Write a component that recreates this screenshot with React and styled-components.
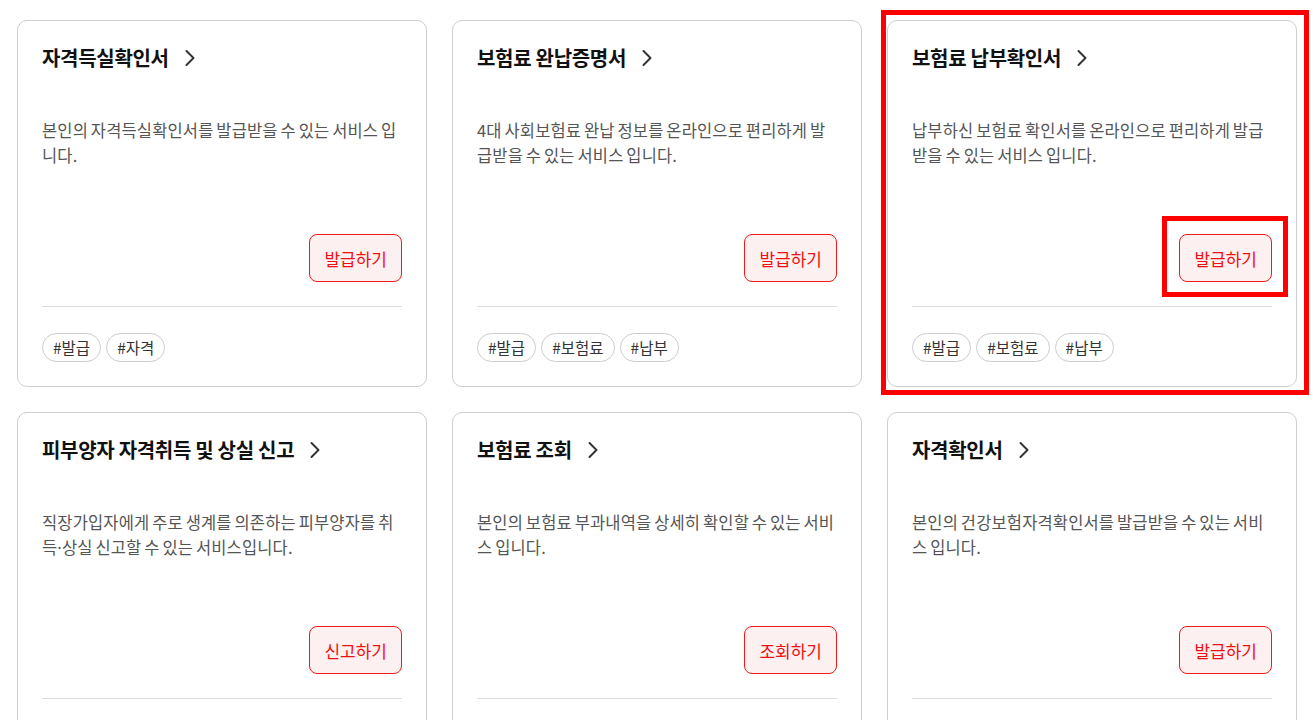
import React from "react"
import styled, { createGlobalStyle } from "styled-components"

const GlobalStyle = createGlobalStyle`
  html, body {
    margin: 0;
    padding: 0;
    background: #fff;
  }
  body {
    font-family: "Noto Sans CJK KR", "Noto Sans", sans-serif;
    color: #111;
  }
`

const services = [
  {
    title: "자격득실확인서",
    desc: "본인의 자격득실확인서를 발급받을 수 있는 서비스 입니다.",
    action: "발급하기",
    tags: ["발급", "자격"],
  },
  {
    title: "보험료 완납증명서",
    desc: "4대 사회보험료 완납 정보를 온라인으로 편리하게 발급받을 수 있는 서비스 입니다.",
    action: "발급하기",
    tags: ["발급", "보험료", "납부"],
  },
  {
    title: "보험료 납부확인서",
    desc: "납부하신 보험료 확인서를 온라인으로 편리하게 발급받을 수 있는 서비스 입니다.",
    action: "발급하기",
    tags: ["발급", "보험료", "납부"],
    highlighted: true,
  },
  {
    title: "피부양자 자격취득 및 상실 신고",
    desc: "직장가입자에게 주로 생계를 의존하는 피부양자를 취득·상실 신고할 수 있는 서비스입니다.",
    action: "신고하기",
    tags: ["신고", "피부양자"],
  },
  {
    title: "보험료 조회",
    desc: "본인의 보험료 부과내역을 상세히 확인할 수 있는 서비스 입니다.",
    action: "조회하기",
    tags: ["조회", "보험료"],
  },
  {
    title: "자격확인서",
    desc: "본인의 건강보험자격확인서를 발급받을 수 있는 서비스 입니다.",
    action: "발급하기",
    tags: ["발급", "자격"],
  },
]

const Grid = styled.div`
  display: grid;
  grid-template-columns: repeat(3, 410px);
  column-gap: 25px;
  row-gap: 25px;
  padding: 20px 0 40px 17px;
`

const Card = styled.article`
  position: relative;
  box-sizing: border-box;
  width: 410px;
  border: 1px solid #cfcfcf;
  border-radius: 10px;
  padding: 24px 24px 24px;
  background: #fff;
`

const Mark = styled.div`
  position: absolute;
  border: 5px solid #ff0000;
  pointer-events: none;
`

const CardMark = styled(Mark)`
  left: -7px;
  top: -11px;
  right: -13px;
  bottom: -9px;
`

const ButtonMark = styled(Mark)`
  left: -17px;
  top: -18px;
  right: -16px;
  bottom: -15px;
`

const TitleLink = styled.a`
  display: inline-flex;
  align-items: center;
  gap: 15px;
  height: 26px;
  font-size: 20px;
  font-weight: 700;
  line-height: 26px;
  color: #111;
  text-decoration: none;
  letter-spacing: -0.3px;
`

const Desc = styled.p`
  margin: 47px 0 0;
  height: 50px;
  font-size: 16.5px;
  line-height: 25px;
  letter-spacing: 0.15px;
  word-spacing: -1px;
  color: #555;
  word-break: break-all;
`

const Dot = styled.span`
  font-family: "Noto Sans", sans-serif;
`

const ActionRow = styled.div`
  display: flex;
  justify-content: flex-end;
  margin-top: 66px;
`

const ButtonWrap = styled.div`
  position: relative;
`

const ActionButton = styled.button`
  box-sizing: border-box;
  height: 48px;
  padding: 0 14px;
  border: 1px solid #f01a1a;
  border-radius: 8px;
  background: #fdf0f0;
  color: #ee1111;
  font-family: inherit;
  font-size: 17px;
  cursor: pointer;
`

const Divider = styled.hr`
  margin: 24px 0 0;
  border: 0;
  border-top: 1px solid #dcdcdc;
`

const Tags = styled.ul`
  display: flex;
  gap: 5px;
  margin: 26px 0 0;
  padding: 0;
  list-style: none;
`

const Tag = styled.li`
  box-sizing: border-box;
  height: 29px;
  padding: 0 10px;
  border: 1px solid #cccccc;
  border-radius: 15px;
  font-size: 15.5px;
  line-height: 27px;
  color: #333;
`

const Chevron = () => (
  <svg width="12" height="18" viewBox="0 0 12 18" fill="none">
    <path d="M2.5 2 L9.5 9 L2.5 16" stroke="#333" strokeWidth="2" strokeLinecap="round" strokeLinejoin="round" />
  </svg>
)

// the middle dot is full width in the CJK font, so it gets a latin one
const withDots = (text) =>
  text.split("·").flatMap((part, i) => (i === 0 ? [part] : [<Dot key={i}>·</Dot>, part]))

const ServiceCard = ({ item }) => (
  <Card>
    <TitleLink href="#">
      {item.title}
      <Chevron />
    </TitleLink>
    <Desc>{withDots(item.desc)}</Desc>
    <ActionRow>
      <ButtonWrap>
        <ActionButton>{item.action}</ActionButton>
        {item.highlighted && <ButtonMark />}
      </ButtonWrap>
    </ActionRow>
    <Divider />
    <Tags>
      {item.tags.map((t) => (
        <Tag key={t}>#{t}</Tag>
      ))}
    </Tags>
    {item.highlighted && <CardMark />}
  </Card>
)

export default function App() {
  return (
    <>
      <GlobalStyle />
      <Grid>
        {services.map((s) => (
          <ServiceCard key={s.title} item={s} />
        ))}
      </Grid>
    </>
  )
}
